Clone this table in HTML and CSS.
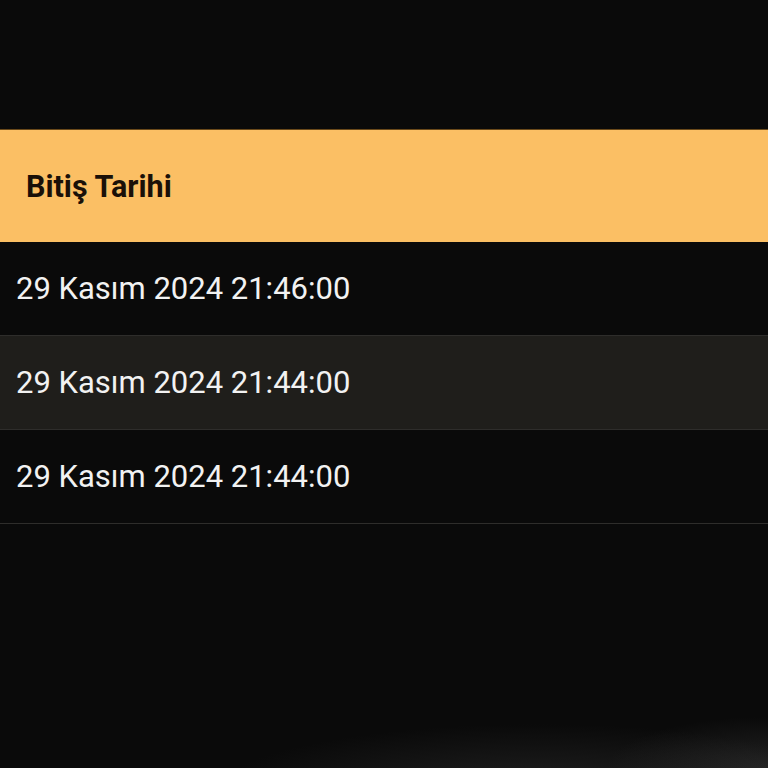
FILE: index.html
```html
<!DOCTYPE html>
<html lang="tr">
<head>
<meta charset="utf-8">
<link rel="stylesheet" href="styles.css">
</head>
<body>
<div class="page">
  <div class="top"></div>
  <div class="table">
    <div class="head">Bitiş Tarihi</div>
    <div class="row">29 Kasım 2024 21:46:00</div>
    <div class="row alt">29 Kasım 2024 21:44:00</div>
    <div class="row">29 Kasım 2024 21:44:00</div>
  </div>
  <div class="fog"></div>
</div>
</body>
</html>
```
FILE: styles.css
```css
html, body {
  margin: 0;
  padding: 0;
  background: #0a0a0a;
}
.page {
  width: 768px;
  height: 768px;
  overflow: hidden;
  display: flex;
  flex-direction: column;
  font-family: Roboto, "Liberation Sans", sans-serif;
  background: #0a0a0a;
}
.top {
  height: 129px;
  flex: none;
}
.table {
  display: flex;
  flex-direction: column;
  flex: none;
}
.head {
  height: 113px;
  background: #fbbf64;
  color: #1a1008;
  font-weight: 700;
  font-size: 30.5px;
  display: flex;
  align-items: center;
  padding-left: 26px;
  border-top: 1px solid #6b4a1a;
  box-sizing: border-box;
}
.row {
  height: 94px;
  box-sizing: border-box;
  border-bottom: 1px solid #2e2d2b;
  color: #f2f2f2;
  font-size: 31px;
  display: flex;
  align-items: center;
  padding-left: 16px;
  background: #0a0a0a;
}
.row.alt {
  background: #1f1e1b;
}
.fog {
  flex: 1;
  background:
    radial-gradient(ellipse 60% 40% at 70% 110%, rgba(60,60,60,0.45), rgba(10,10,10,0) 70%),
    radial-gradient(ellipse 30% 30% at 100% 100%, rgba(70,70,70,0.4), rgba(10,10,10,0) 70%);
}
```
